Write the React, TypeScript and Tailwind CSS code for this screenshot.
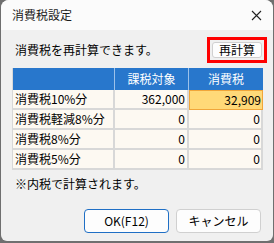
import React from "react";

const rows = [
  { label: "消費税10%分", base: "362,000", tax: "32,909", hi: true },
  { label: "消費税軽減8%分", base: "0", tax: "0" },
  { label: "消費税8%分", base: "0", tax: "0" },
  { label: "消費税5%分", base: "0", tax: "0" },
];

export default function App() {
  const font = { fontFamily: '"Noto Sans CJK JP", "Noto Sans", sans-serif' };
  return (
    <div className="w-[274px] h-[243px] bg-[#6f6f6f] pl-px pr-px pt-0 pb-[2px]" style={font}>
      <div className="w-full h-full bg-[#f0f0f0] rounded-t-[8px] rounded-b-[6px] overflow-hidden flex flex-col">
        <div className="h-[30px] bg-[#fbfbfb] flex items-center justify-between pl-[11px] pr-[11px] shrink-0">
          <span className="text-[12px] text-[#1a1a1a] leading-none">消費税設定</span>
          <svg width="11" height="11" viewBox="0 0 11 11" className="mt-px">
            <path d="M1 1 L10 10 M10 1 L1 10" stroke="#222" strokeWidth="1.1" />
          </svg>
        </div>
        <div className="flex flex-col px-[11px]">
          <div className="flex items-center justify-between h-[35px] mt-[2px]">
            <span className="text-[12px] text-black leading-none pl-[3px]">消費税を再計算できます。</span>
            <div className="border-[3px] border-[#ff0000] p-[2px] -mr-[5px] mt-[1px]">
              <button className="w-[50px] h-[16px] bg-[#fdfdfd] border border-[#d0d0d0] rounded-[3px] text-[12px] leading-none text-black flex items-center justify-center">
                再計算
              </button>
            </div>
          </div>
          <div className="grid grid-cols-[102px_74px_74px] border-l border-[#d8d8d8] mt-px w-[251px]">
            <div className="h-[22px] bg-[#2877cc] border-r border-[#9cc1ea]" />
            <div className="h-[22px] bg-[#2877cc] border-r border-[#9cc1ea] flex items-center justify-center text-white text-[12px]">課税対象</div>
            <div className="h-[22px] bg-[#2877cc] flex items-center justify-center text-white text-[12px]">消費税</div>
            {rows.map((r, i) => (
              <React.Fragment key={i}>
                <div className="h-[20px] bg-[#fdf9f2] border-r-2 border-b-2 border-[#d8d8d8] flex items-center pl-[2px] text-[12px] text-black leading-none">{r.label}</div>
                <div className="h-[20px] bg-[#fdf9f2] border-r-2 border-b-2 border-[#d8d8d8] flex items-center justify-end pr-[2px] text-[12px] text-black leading-none">{r.base}</div>
                {r.hi ? (
                  <div className="h-[20px] bg-[#ffd978] border border-[#f0a63a] flex items-center justify-end pr-[1px] text-[12px] text-black leading-none">{r.tax}</div>
                ) : (
                  <div className="h-[20px] bg-[#fdf9f2] border-r-2 border-b-2 border-[#d8d8d8] flex items-center justify-end pr-[1px] text-[12px] text-black leading-none">{r.tax}</div>
                )}
              </React.Fragment>
            ))}
          </div>
          <div className="mt-[8px] pl-[3px] text-[12px] text-black leading-none">※内税で計算されます。</div>
          <div className="flex justify-end gap-[7px] mt-[19px] pr-[1px]">
            <button className="w-[85px] h-[24px] bg-[#fdfdfd] border border-[#1f6fc5] rounded-[4px] text-[12px] text-black leading-none">OK(F12)</button>
            <button className="w-[85px] h-[24px] bg-[#fdfdfd] border border-[#d0d0d0] rounded-[4px] text-[12px] text-black leading-none">キャンセル</button>
          </div>
        </div>
      </div>
    </div>
  );
}
